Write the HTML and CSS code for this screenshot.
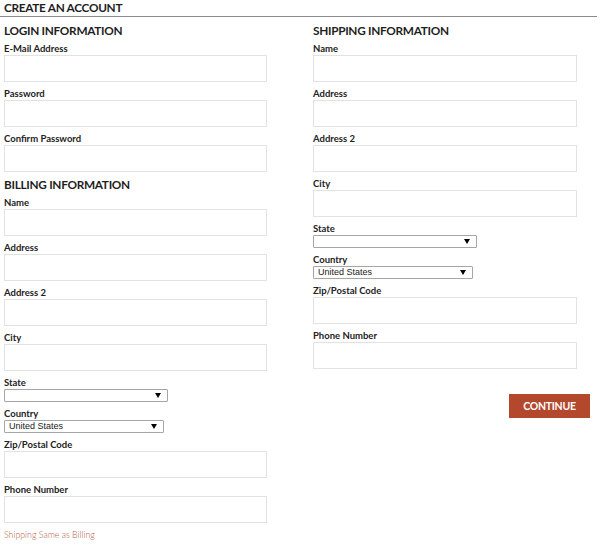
FILE: index.html
```html
<!DOCTYPE html>
<html>
<head>
<meta charset="utf-8">
<link rel="stylesheet" href="styles.css">
</head>
<body>
<div class="page">
  <h1 class="title">CREATE AN ACCOUNT</h1>
  <div class="columns">
    <div class="col col-left">
      <h2 class="section">LOGIN INFORMATION</h2>
      <div class="field"><label>E-Mail Address</label><div class="input"></div></div>
      <div class="field"><label>Password</label><div class="input"></div></div>
      <div class="field"><label>Confirm Password</label><div class="input"></div></div>

      <h2 class="section">BILLING INFORMATION</h2>
      <div class="field"><label>Name</label><div class="input"></div></div>
      <div class="field"><label>Address</label><div class="input"></div></div>
      <div class="field"><label>Address 2</label><div class="input"></div></div>
      <div class="field"><label>City</label><div class="input"></div></div>
      <div class="field"><label>State</label>
        <div class="select select-state"><span class="select-text"></span><svg class="arrow" width="6" height="5" viewBox="0 0 6 5"><path d="M0 0H6L3 5Z" fill="#000"/></svg></div>
      </div>
      <div class="field"><label>Country</label>
        <div class="select select-country"><span class="select-text">United States</span><svg class="arrow" width="6" height="5" viewBox="0 0 6 5"><path d="M0 0H6L3 5Z" fill="#000"/></svg></div>
      </div>
      <div class="field"><label>Zip/Postal Code</label><div class="input"></div></div>
      <div class="field"><label>Phone Number</label><div class="input"></div></div>
      <a class="same-link">Shipping Same as Billing</a>
    </div>

    <div class="col col-right">
      <h2 class="section">SHIPPING INFORMATION</h2>
      <div class="field"><label>Name</label><div class="input"></div></div>
      <div class="field"><label>Address</label><div class="input"></div></div>
      <div class="field"><label>Address 2</label><div class="input"></div></div>
      <div class="field"><label>City</label><div class="input"></div></div>
      <div class="field"><label>State</label>
        <div class="select select-state"><span class="select-text"></span><svg class="arrow" width="6" height="5" viewBox="0 0 6 5"><path d="M0 0H6L3 5Z" fill="#000"/></svg></div>
      </div>
      <div class="field"><label>Country</label>
        <div class="select select-country"><span class="select-text">United States</span><svg class="arrow" width="6" height="5" viewBox="0 0 6 5"><path d="M0 0H6L3 5Z" fill="#000"/></svg></div>
      </div>
      <div class="field"><label>Zip/Postal Code</label><div class="input"></div></div>
      <div class="field"><label>Phone Number</label><div class="input"></div></div>
      <div class="actions"><button class="continue">CONTINUE</button></div>
    </div>
  </div>
</div>
</body>
</html>
```
FILE: styles.css
```css
html, body {
  margin: 0;
  padding: 0;
  background: #fff;
}
body {
  font-family: Lato, "Open Sans", sans-serif;
  color: #1e1e1e;
}
.page {
  width: 597px;
}
.title {
  margin: 0;
  padding: 0 0 1px 4px;
  font-size: 11.8px;
  line-height: 15px;
  font-weight: 700;
  letter-spacing: -0.3px;
  border-bottom: 1px solid #8a8a8a;
}
.columns {
  display: flex;
  padding-left: 4px;
  padding-top: 7px;
}
.col {
  display: flex;
  flex-direction: column;
}
.col-left {
  width: 309px;
}
.col-right {
  width: 277px;
}
.section {
  margin: 0 0 5px 0;
  font-size: 11.8px;
  line-height: 14px;
  font-weight: 700;
  letter-spacing: -0.3px;
}
.field {
  display: flex;
  flex-direction: column;
  margin-bottom: 6px;
}
.field label {
  font-size: 9.5px;
  line-height: 12px;
  font-weight: 700;
  color: #222;
}
.input {
  height: 25px;
  border: 1px solid #e2e2e2;
  background: #fff;
}
.col-left .input { width: 261px; }
.col-right .input { width: 262px; }
.select {
  display: flex;
  align-items: center;
  justify-content: space-between;
  height: 11px;
  border: 1px solid #a6a6a6;
  border-radius: 1px;
  padding: 0 6px 0 4px;
  box-sizing: content-box;
}
.select-state { width: 152px; }
.select-country { width: 148px; }
.select-text {
  font-family: "Liberation Sans", Arial, sans-serif;
  font-size: 9px;
  line-height: 11px;
  color: #222;
}
.arrow {
  display: block;
}
.same-link {
  margin-top: 0;
  font-size: 8.8px;
  line-height: 12px;
  color: #b85a42;
  font-weight: 300;
}
.actions {
  display: flex;
  justify-content: flex-end;
  margin-top: 19px;
}
.continue {
  width: 81px;
  height: 24px;
  border: 0;
  padding: 0;
  background: #b3482d;
  color: #fff;
  font-family: Lato, sans-serif;
  font-size: 10.5px;
  font-weight: 700;
  letter-spacing: -0.3px;
}
```
